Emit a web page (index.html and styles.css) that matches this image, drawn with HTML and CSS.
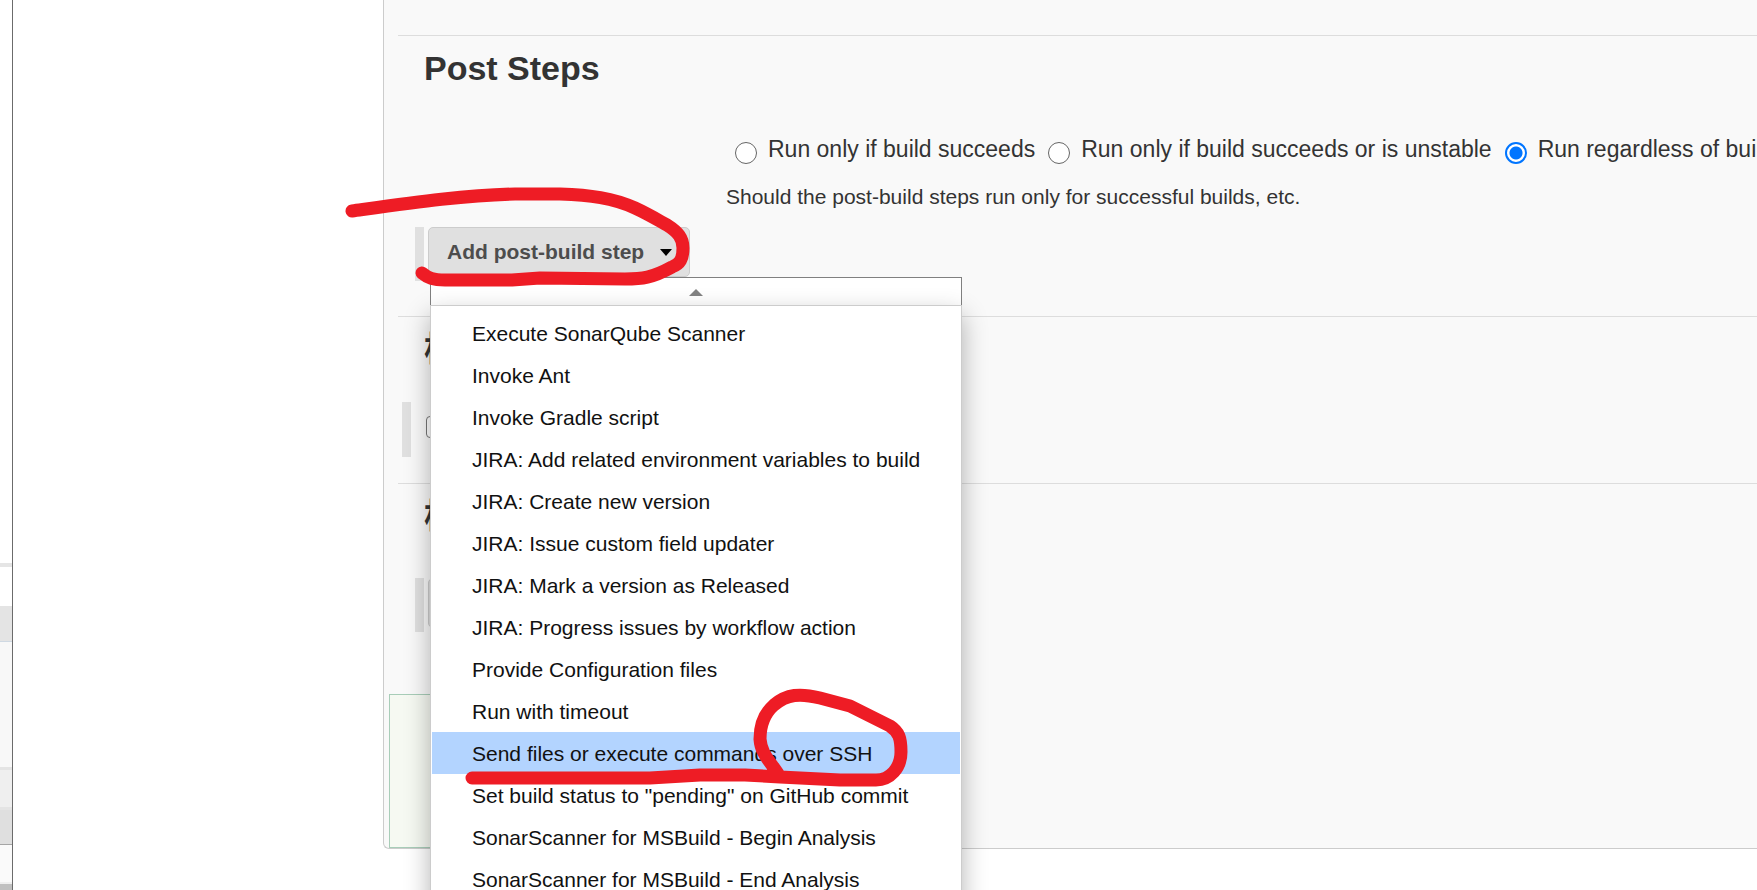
FILE: index.html
```html
<!DOCTYPE html>
<html lang="zh-CN">
<head>
<meta charset="utf-8">
<title>Post Steps</title>
<link rel="stylesheet" href="styles.css">
</head>
<body>
<div class="page">
  <aside class="edge">
    <div class="edge-blank"></div>
    <div class="edge-rule"></div>
    <div class="edge-gap"></div>
    <div class="edge-head"></div>
    <div class="edge-body"></div>
    <div class="edge-bar"></div>
    <div class="edge-tab"></div>
    <div class="edge-foot"></div>
    <div class="edge-end"></div>
  </aside>
  <main class="panel">
    <section class="section">
      <h2 class="title">Post Steps</h2>
      <div class="settings">
        <div class="radios">
          <label class="choice"><input class="radio" type="radio" name="run">Run only if build succeeds</label>
          <label class="choice"><input class="radio" type="radio" name="run">Run only if build succeeds or is unstable</label>
          <label class="choice"><input class="radio" type="radio" name="run" checked>Run regardless of build result</label>
        </div>
        <p class="help">Should the post-build steps run only for successful builds, etc.</p>
      </div>
      <div class="step">
        <span class="handle"></span>
        <div class="dropdown">
          <button class="button" type="button">Add post-build step <span class="caret"></span></button>
          <div class="menu">
            <div class="menu-scroll"><span class="caret-up"></span></div>
            <ul class="menu-list">
              <li class="item">Execute SonarQube Scanner</li>
              <li class="item">Invoke Ant</li>
              <li class="item">Invoke Gradle script</li>
              <li class="item">JIRA: Add related environment variables to build</li>
              <li class="item">JIRA: Create new version</li>
              <li class="item">JIRA: Issue custom field updater</li>
              <li class="item">JIRA: Mark a version as Released</li>
              <li class="item">JIRA: Progress issues by workflow action</li>
              <li class="item">Provide Configuration files</li>
              <li class="item">Run with timeout</li>
              <li class="item selected">Send files or execute commands over SSH</li>
              <li class="item">Set build status to "pending" on GitHub commit</li>
              <li class="item">SonarScanner for MSBuild - Begin Analysis</li>
              <li class="item">SonarScanner for MSBuild - End Analysis</li>
            </ul>
          </div>
        </div>
      </div>
    </section>
    <section class="section section-build">
      <h2 class="title">构建设置</h2>
      <div class="step step-check">
        <span class="handle"></span>
        <input class="check" type="checkbox" aria-label="构建设置">
      </div>
    </section>
    <section class="section section-after">
      <h2 class="title">构建后操作</h2>
      <div class="step">
        <span class="handle"></span>
        <button class="button" type="button" aria-label="构建后操作"><span class="caret"></span></button>
      </div>
    </section>
    <div class="savebar"></div>
  </main>
  <svg class="marks" aria-hidden="true">
    <path d="M352 211C410 203 465 195 515 194H560C590 195 613 198 635 208C648 214 658 220 667 225C678 232 683 238 683 248C683 259 680 264 672 267C652 278 642 279 625 279L540 278L512 280H445C433 280 428 278 422 273"/>
    <path d="M472 778H650L700 775H745L780 777L840 780H876C890 780 901 768 901 752C901 738 899 732 890 726L850 706L820 698C800 693 787 694 774 705C765 713 760 724 760 739C761 755 772 763 780 777"/>
  </svg>
</div>
</body>
</html>
```
FILE: styles.css
```css
* { box-sizing: border-box; }

body {
  margin: 0;
  background: #fff;
  color: #333;
  font-family: "Liberation Sans", "Noto Sans CJK SC", sans-serif;
  font-size: 21px;
  line-height: 24px;
}

.page {
  position: relative;
  display: flex;
  align-items: flex-start;
  height: 100vh;
  overflow: hidden;
}

/* Strip of the window behind */
.edge {
  display: flex;
  flex-direction: column;
  flex: none;
  align-self: stretch;
  width: 13px;
  border-right: 1px solid #6b6b6b;
}
.edge-blank { flex: 1; }
.edge-rule { height: 4px; background: #e5e5e5; }
.edge-gap { height: 39px; }
.edge-head { height: 36px; background: #e4e4e4; border-bottom: 1px solid #cfd9e3; }
.edge-body { height: 125px; background: #f8f8f8; }
.edge-bar { height: 40px; background: #efefef; border-top: 3px solid #e4e4e4; }
.edge-tab { height: 38px; background: #dfdfdf; border-top: 3px solid #e4e4e4; border-bottom: 1px solid #a5a5a5; }
.edge-foot { height: 39px; background: #fafafa; border-bottom: 2px solid #efefef; }
.edge-end { height: 6px; background: #c0c0c0; }

.panel {
  flex: 1;
  min-width: 0;
  margin-left: 370px;
  padding: 35px 0 0 14px;
  background: #f9f9f9;
  border: 1px solid #ccc;
  border-width: 0 0 1px 1px;
  border-bottom-left-radius: 6px;
}

.section {
  padding: 12px 0 35px 17px;
  border-top: 1px solid #ddd;
}
.section-build { padding-bottom: 26px; }
.section-after { padding-bottom: 62px; }

.title {
  margin: 0 0 0 9px;
  font-size: 34px;
  line-height: 40px;
}

.settings { margin: 48px 0 18px 311px; }
.radios {
  display: flex;
  gap: 13px;
  height: 28px;
  margin-left: 9px;
}
.choice {
  display: flex;
  flex: none;
  align-items: flex-start;
  gap: 11px;
  font-size: 23px;
  line-height: 26px;
  white-space: nowrap;
}
.radio {
  appearance: none;
  width: 22px;
  height: 22px;
  margin: 6px 0 0;
  background: #fff;
  border: 1px solid #666;
  border-radius: 50%;
}
.radio:checked {
  border: 2px solid #0075ff;
  background: radial-gradient(circle, #0075ff 6px, #fff 7px);
}
.help { margin: 21px 0 0; }

.step {
  display: flex;
  align-items: flex-start;
  gap: 4px;
}
.section-after .step { margin-top: 42px; }
.step-check {
  gap: 15px;
  margin: 33px 0 0 -13px;
}
.handle { width: 9px; height: 54px; background: #e0e0e0; }
.step-check .handle { height: 55px; }
.check {
  appearance: none;
  width: 22px;
  height: 22px;
  margin: 14px 0 0;
  background: #fff;
  border: 1px solid #767676;
  border-radius: 4px;
}

.button {
  display: flex;
  align-items: center;
  gap: 16px;
  height: 50px;
  padding: 0 17px 0 18px;
  color: #4d4d4d;
  background: #e0e0e0;
  border: 1px solid #ccc;
  border-radius: 5px;
  font: bold 21px/24px "Liberation Sans", "Noto Sans CJK SC", sans-serif;
}
.caret {
  border: 6px solid transparent;
  border-top: 7px solid #000;
  border-bottom: 0;
}
.caret-up {
  border: 7px solid transparent;
  border-bottom: 7px solid #808080;
  border-top: 0;
}

.dropdown { position: relative; }
.menu {
  position: absolute;
  top: 100%;
  left: 2px;
  z-index: 1;
  width: max-content;
  color: #111;
}
.menu-scroll {
  display: flex;
  align-items: center;
  justify-content: center;
  height: 28px;
  padding-top: 2px;
  background: #fff;
  border: 1px solid #808080;
  border-bottom: 0;
}
.menu-list {
  margin: 0;
  padding: 6px 1px;
  list-style: none;
  background: #fff;
  border: 1px solid #ccc;
  box-shadow: 0 10px 24px rgba(0, 0, 0, 0.3);
}
.item { padding: 10px 40px 8px; }
.selected { background: #b3d4ff; }

.savebar {
  width: 420px;
  height: 154px;
  margin-left: -9px;
  background: #f6f9f2;
  border: 1px solid #a8cdb8;
}

.marks {
  position: absolute;
  inset: 0;
  z-index: 2;
  width: 100%;
  height: 100%;
  fill: none;
  stroke: #ee1c25;
  stroke-width: 13px;
  stroke-linecap: round;
  stroke-linejoin: round;
  pointer-events: none;
}
```
